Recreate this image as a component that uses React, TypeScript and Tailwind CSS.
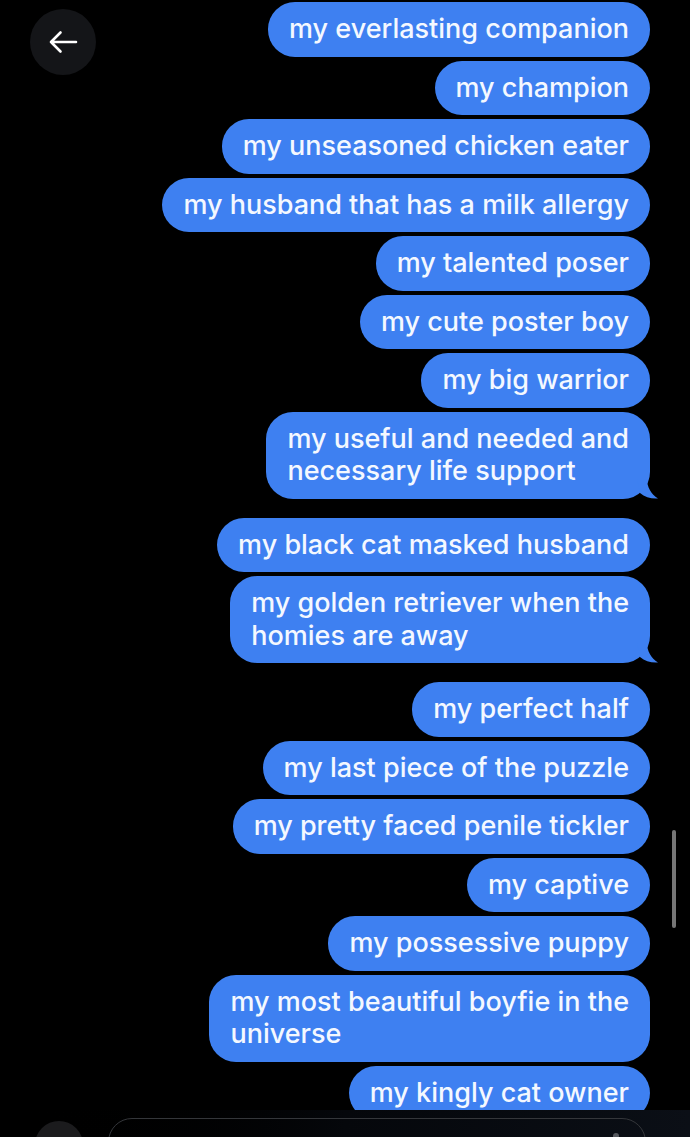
type Msg = { lines: string[]; tail?: boolean };

const messages: Msg[] = [
  { lines: ['my everlasting companion'] },
  { lines: ['my champion'] },
  { lines: ['my unseasoned chicken eater'] },
  { lines: ['my husband that has a milk allergy'] },
  { lines: ['my talented poser'] },
  { lines: ['my cute poster boy'] },
  { lines: ['my big warrior'] },
  { lines: ['my useful and needed and', 'necessary life support'], tail: true },
  { lines: ['my black cat masked husband'] },
  { lines: ['my golden retriever when the', 'homies are away'], tail: true },
  { lines: ['my perfect half'] },
  { lines: ['my last piece of the puzzle'] },
  { lines: ['my pretty faced penile tickler'] },
  { lines: ['my captive'] },
  { lines: ['my possessive puppy'] },
  { lines: ['my most beautiful boyfie in the', 'universe'] },
  { lines: ['my kingly cat owner'] },
];

function Bubble({ msg }: { msg: Msg }) {
  return (
    <div className={msg.tail ? 'relative mb-[15px]' : 'relative'}>
      <div className="rounded-[27px] bg-[#3e80f1] px-[21px] py-[11px] text-[27px] leading-[32.5px] font-medium whitespace-nowrap text-[#f4f8ff]">
        {msg.lines.map((l, i) => (
          <div key={i}>{l}</div>
        ))}
      </div>
      {msg.tail && (
        <svg
          className="absolute right-[-9px] bottom-0"
          width="22"
          height="20"
          viewBox="0 0 22 20"
        >
          <path d="M0 0 L10 0 C10 8 14 15 21 19.5 C14 20 8 18 3 14 Z" fill="#3e80f1" />
        </svg>
      )}
    </div>
  );
}

export default function App() {
  return (
    <div
      className="relative flex h-[1137px] w-[690px] flex-col overflow-hidden bg-black"
      style={{ fontFamily: 'Inter, "Liberation Sans", sans-serif' }}
    >
      <div className="flex h-[1110px] shrink-0 flex-col items-end gap-[4px] overflow-hidden pt-[2px] pr-[40px]">
        {messages.map((m, i) => (
          <Bubble key={i} msg={m} />
        ))}
      </div>

      {/* composer */}
      <div className="flex flex-1 items-start gap-[25px] bg-gradient-to-r from-black via-[#05070b] to-[#0b0f16] pt-[8px] pl-[35px]">
        <div className="mt-[3px] h-[48px] w-[48px] shrink-0 rounded-full bg-[#1b1b1d]" />
        <div className="flex h-[50px] w-[538px] shrink-0 justify-end rounded-[24px] border-[1.5px] border-[#34363a] pt-[14px] pr-[26px]">
          <div className="h-[6px] w-[6px] rounded-full bg-[#55585e]" />
        </div>
      </div>

      {/* back button */}
      <button className="absolute top-[9px] left-[30px] flex h-[66px] w-[66px] items-center justify-center rounded-full bg-[#141518]">
        <svg width="30" height="24" viewBox="0 0 30 24" fill="none">
          <path
            d="M28 12 H3 M12.5 2.5 L3 12 L12.5 21.5"
            stroke="white"
            strokeWidth="2.6"
            strokeLinecap="round"
            strokeLinejoin="round"
          />
        </svg>
      </button>

      {/* scrollbar */}
      <div className="absolute top-[830px] right-[14px] h-[98px] w-[4px] rounded-full bg-[#767676]" />
    </div>
  );
}
